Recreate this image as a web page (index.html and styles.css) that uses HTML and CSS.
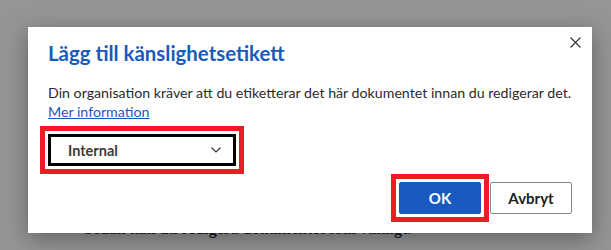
FILE: index.html
```html
<!DOCTYPE html>
<html lang="sv">
    <head>
        <title>Lägg till känslighetsetikett</title>
        <meta charset="UTF-8"/>
        <meta name="viewport" content="width=device-width" />
        <link rel="stylesheet" href="styles.css">
    </head>
    <body>
        <div id="dokument">
            <p class="dok_rad">Sedan kan du redigera dokumentet som vanligt.</p>
        </div>

        <div id="dialog" role="dialog">
            <button class="stang" type="button" aria-label="Stäng">
                <svg width="11" height="11" viewBox="0 0 11 11">
                    <path d="M0.5 0.5L10.5 10.5M10.5 0.5L0.5 10.5" stroke="#323130" stroke-width="1.1" fill="none"/>
                </svg>
            </button>

            <h1 class="rubrik">Lägg till känslighetsetikett</h1>
            <p class="info">Din organisation kräver att du etiketterar det här dokumentet innan du redigerar det.</p>
            <a class="lank" href="#">Mer information</a>

            <span class="markerad etikett_ram">
                <span class="etikett">
                    <span>Internal</span>
                    <svg width="10" height="6" viewBox="0 0 10 6">
                        <path d="M0.5 0.5L5 5L9.5 0.5" stroke="#323130" stroke-width="1.1" fill="none"/>
                    </svg>
                </span>
            </span>

            <div class="knappar">
                <span class="markerad"><button class="knapp primar" type="button">OK</button></span>
                <button class="knapp" type="button">Avbryt</button>
            </div>
        </div>
    </body>
</html>
```

FILE: styles.css
```css
* {
	margin: 0px;
	padding: 0px;
	box-sizing: border-box;
}

body {
	width: 611px;
	height: 250px;
	overflow: hidden;
	background: #959595;
	font-family: Lato, "Noto Sans", sans-serif;
	color: #2b2a29;
}

#dokument {
	padding: 220px 0 0 84px;
}

.dok_rad {
	font-family: "Liberation Serif", serif;
	font-weight: bold;
	font-size: 16px;
	color: #1e1e1e;
}

/* dialogen ligger ovanpå dokumentet */
#dialog {
	position: absolute;
	left: 28px;
	top: 27px;
	width: 564px;
	height: 206px;
	background: #ffffff;
	padding: 12px 20px 0 20px;
	display: flex;
	flex-direction: column;
	align-items: flex-start;
	box-shadow: 0 6px 22px rgba(0, 0, 0, 0.35);
}

.stang {
	position: absolute;
	top: 10px;
	right: 11px;
	border: none;
	background: none;
	width: 11px;
	height: 11px;
	display: flex;
}

.rubrik {
	font-size: 20.4px;
	font-weight: bold;
	line-height: 28px;
	color: #185abd;
}

.info {
	margin-top: 16px;
	font-size: 14.2px;
	line-height: 19px;
	white-space: nowrap;
}

.lank {
	font-size: 14.2px;
	line-height: 20px;
	color: #185abd;
	text-decoration: underline;
}

.markerad {
	display: flex;
	outline: 5px solid #ed1c24;
	outline-offset: 3px;
}

.etikett_ram {
	margin-top: 12px;
}

.etikett {
	width: 188px;
	height: 32px;
	border: 3px solid #000000;
	display: flex;
	align-items: center;
	justify-content: space-between;
	padding: 0 12px 0 17px;
	font-size: 14.5px;
	font-weight: bold;
	color: #3b3a39;
}

.knappar {
	margin-top: 16px;
	align-self: flex-end;
	display: flex;
	gap: 9px;
}

.knapp {
	width: 82px;
	height: 32px;
	border: 1px solid #8a8886;
	border-radius: 2px;
	background: #ffffff;
	font-family: Lato, "Noto Sans", sans-serif;
	font-size: 15px;
	font-weight: bold;
	color: #201f1e;
}

.primar {
	background: #185abd;
	border-color: #185abd;
	color: #ffffff;
}
```
